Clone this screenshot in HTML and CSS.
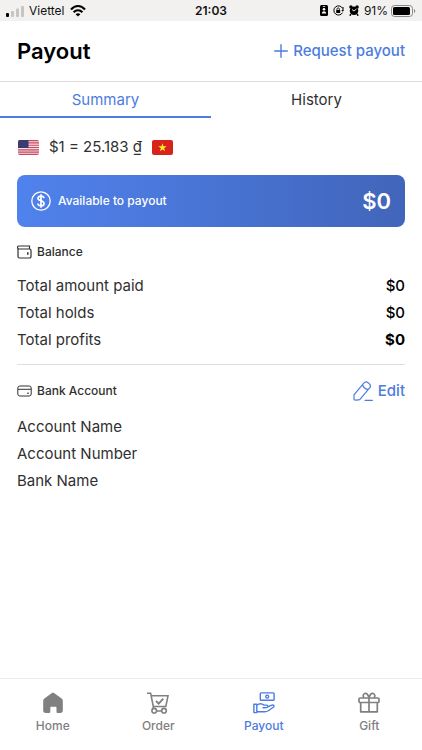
FILE: index.html
```html
<!DOCTYPE html>
<html lang="en">
<head>
<meta charset="utf-8">
<meta name="viewport" content="width=device-width, initial-scale=1">
<title>Payout</title>
<link rel="stylesheet" href="styles.css">
</head>
<body>
<div class="status">
  <div class="status-side">
    <svg width="18" height="12" viewBox="0 0 18 12"><rect x="0" y="8" width="3" height="4" rx="1" fill="#000"/><g fill="#c6c5c4"><rect x="5" y="6" width="3" height="6" rx="1"/><rect x="10" y="3.500" width="3" height="8.500" rx="1"/><rect x="15" y="1" width="3" height="11" rx="1"/></g></svg>
    <span>Viettel</span>
    <svg width="16" height="12" viewBox="0 0 16 12" fill="none" stroke="#000" stroke-width="2.100"><path d="M1 4.500C5-.1 11-.1 15 4.500M3.600 7.200c2.500-2.700 6.300-2.700 8.800 0"/><path d="M8 11.600 5.600 9.200c1.300-1.300 3.500-1.300 4.800 0z" fill="#000" stroke="none"/></svg>
  </div>
  <time class="clock">21:03</time>
  <div class="status-side status-right">
    <svg width="8" height="11" viewBox="0 0 8 11"><rect width="8" height="11" rx="1.500"/><circle cx="4" cy="4.300" r="1.300" fill="#fff"/><path d="M1.800 8.500c.3-3 4.100-3 4.400 0zM2.800 1.200h2.400v.8H2.800z" fill="#fff"/></svg>
    <svg width="11" height="11" viewBox="0 0 11 11"><path d="M9.600 3.400A4.600 4.600 0 1 0 9.500 7.700M10 2v3.200" fill="none" stroke="#000" stroke-width="1"/><path d="M8.300 5h2.700L9.700 6.800z"/><rect x="3.200" y="5" width="4" height="3" rx=".5"/><path d="M4 5V4c0-1.600 2.400-1.600 2.400 0v1" fill="none" stroke="#000" stroke-width=".8"/></svg>
    <svg width="10" height="11" viewBox="0 0 10 11"><circle cx="5" cy="5.700" r="4.300"/><circle cx="1.900" cy="2" r="1.700"/><circle cx="8.100" cy="2" r="1.700"/><path d="m2 9-1.200 1.700M8 9l1.200 1.700" stroke="#000" stroke-width="1.500"/><path d="M5 6 3 4.500M5 6l2.500-2" stroke="#fff" stroke-width=".9"/></svg>
    <div class="battery">
      <span>91%</span>
      <svg width="25" height="12" viewBox="0 0 25 12"><rect x=".5" y=".5" width="21" height="11" rx="3" fill="none" stroke="#888"/><rect x="2" y="2" width="17" height="8" rx="1.500"/><path d="M23 4c1.700.7 1.700 3.300 0 4z" fill="#888"/></svg>
    </div>
  </div>
</div>

<header class="header">
  <h1>Payout</h1>
  <button type="button" class="action">
    <svg width="14" height="14" viewBox="0 0 14 14" fill="none" stroke="currentColor" stroke-width="1.400" stroke-linecap="round"><path d="M7 .7v12.600M.7 7h12.600"/></svg>
    Request payout
  </button>
</header>

<div class="tabs" role="tablist">
  <button type="button" role="tab" aria-selected="true" class="tab tab-active">Summary</button>
  <button type="button" role="tab" aria-selected="false" class="tab">History</button>
</div>

<main class="content">
  <div class="rate">
    <svg width="21" height="15" viewBox="0 0 21 15"><defs><clipPath id="flag"><rect width="21" height="15" rx="2"/></clipPath></defs><g clip-path="url(#flag)"><path fill="#f5e1e5" d="M0 0h21v15H0z"/><path stroke="#c8485c" stroke-width="1.150" d="M0 .6h21M0 2.900h21M0 5.200h21M0 7.500h21M0 9.800h21M0 12.100h21M0 14.400h21"/><path fill="#393b70" d="M0 0h10.500v8H0z"/><path stroke="#55578a" stroke-width=".6" stroke-dasharray=".6 1.400" d="M1 2h9M2 4h8M1 6h9"/></g></svg>
    <span>$1 = 25.183 ₫</span>
    <svg width="21" height="15" viewBox="0 0 21 15"><rect width="21" height="15" rx="2" fill="#d8231d"/><path fill="#ffed25" d="m10.500 3.200 1 3.100h3.200l-2.600 1.900 1 3.100-2.600-1.900-2.600 1.900 1-3.100-2.600-1.900h3.200z"/></svg>
  </div>

  <section class="card">
    <div class="card-label">
      <svg width="20" height="20" viewBox="0 0 20 20" fill="none" stroke="#fff"><circle cx="10" cy="10" r="9.200" stroke-width="1.300"/><path d="M13 7.200c-.3-1.500-1.400-2-3-2-1.800 0-3 .8-3 2.200C7 10.500 13 9 13 12.400c0 1.500-1.200 2.400-3 2.400s-3-.8-3.200-2.300M10 3.300v13.400" stroke-width="1.700"/></svg>
      <span>Available to payout</span>
    </div>
    <strong class="card-value">$0</strong>
  </section>

  <section class="balance">
    <h2 class="section-title">
      <svg width="15" height="14" viewBox="0 0 15 14" fill="none" stroke="currentColor" stroke-width="1.200"><path d="M1 3v8.500a1.500 1.500 0 0 0 1.500 1.500h10a1.500 1.500 0 0 0 1.500-1.500v-6A1.500 1.500 0 0 0 12.500 4H2a1.500 1.500 0 0 1 0-3h10.500v3"/><path d="M10.800 7.300v2.400" stroke-width="1.500"/></svg>
      Balance
    </h2>
    <dl class="rows">
      <div class="row"><dt>Total amount paid</dt><dd>$0</dd></div>
      <div class="row"><dt>Total holds</dt><dd>$0</dd></div>
      <div class="row"><dt>Total profits</dt><dd class="total">$0</dd></div>
    </dl>
  </section>

  <section class="bank">
    <div class="bank-head">
      <h2 class="section-title">
        <svg width="15" height="12" viewBox="0 0 15 12" fill="none" stroke="currentColor"><rect x=".8" y="1" width="13.400" height="10" rx="2"/><path d="M1 4.300h13M10 8.200h2"/></svg>
        Bank Account
      </h2>
      <button type="button" class="action">
        <svg width="20" height="20" viewBox="0 0 20 20" fill="none" stroke="currentColor" stroke-width="1.200" stroke-linecap="round" stroke-linejoin="round"><path d="M1 13.800 10.800 2.100c1.300-1.500 2.900-1.600 4.400-.3l1 .8c1.500 1.300 1.600 2.900.4 4.300L7.200 18.100c-.4.500-.9.800-1.500.8l-3.200.3c-.8.100-1.500-.5-1.500-1.300zM9.500 3.800c.8 2.500 2.600 4.200 5.500 4.800M12 19.300h7.400"/></svg>
        Edit
      </button>
    </div>
    <ul class="rows">
      <li class="row">Account Name</li>
      <li class="row">Account Number</li>
      <li class="row">Bank Name</li>
    </ul>
  </section>
</main>

<nav class="nav">
  <a href="#home">
    <svg width="22" height="22" viewBox="0 0 22 22" fill="currentColor"><path d="M9.600 1.300c.9-.6 1.900-.6 2.800 0l7.200 5.300c.8.600 1.200 1.300 1.200 2.300v9.600c0 1.600-.9 2.500-2.500 2.500h-2.200c-1 0-1.600-.6-1.600-1.600v-3.600c0-.7-.4-1.100-1.100-1.100h-4c-.7 0-1.100.4-1.100 1.100v3.600c0 1-.6 1.600-1.600 1.600H3.700c-1.600 0-2.500-.9-2.500-2.500V8.900c0-1 .4-1.700 1.200-2.300z"/></svg>
    Home
  </a>
  <a href="#order">
    <svg width="22" height="22" viewBox="0 0 22 22" fill="none" stroke="currentColor" stroke-width="1.600"><path d="M0 1.200h3.600L6.300 14.500h12.500L21 3.800H4.200M6.300 14.500 6 17M9.500 19h5"/><path d="m9 9 2.700 2.600 4.600-5" stroke-width="1.900"/><circle cx="7.200" cy="18.700" r="2.300"/><circle cx="17" cy="18.700" r="2.300"/></svg>
    Order
  </a>
  <a href="#payout" class="current" aria-current="page">
    <svg width="22" height="22" viewBox="0 0 22 22" fill="none" stroke="currentColor" stroke-width="1.400" stroke-linejoin="round" stroke-linecap="round"><rect x="7.300" y=".9" width="13.800" height="7.400" rx=".8"/><circle cx="14.200" cy="4.600" r="1.500"/><path d="M.9 12.200h2.900v8.400H.9zM3.800 13.200c2.500-2 5-1.900 7.200-.1h2.600c1.700 0 1.800 2.200.1 2.400l-3.700.3M14.700 14.900l4.300-1.700c1.700-.6 2.800 1 1.300 2.100l-4.600 3.200c-1.300.9-2.500 1.300-4 1.300H3.800"/></svg>
    Payout
  </a>
  <a href="#gift">
    <svg width="22" height="22" viewBox="0 0 22 22" fill="none" stroke="currentColor" stroke-width="1.700" stroke-linejoin="round"><rect x="1" y="6" width="20" height="4.500" rx="1"/><path d="M2.700 10.500v9.300h16.600v-9.300M11 6v13.800M11 5.800C10 2.500 8.500 1 6.800 1.500 5 2.100 4.600 4.200 6 5.900M11 5.800c1-3.300 2.500-4.800 4.200-4.300 1.800.6 2.200 2.700.8 4.400"/></svg>
    Gift
  </a>
</nav>
</body>
</html>
```
FILE: styles.css
```css
* { box-sizing: border-box; }

body {
  margin: 0;
  min-height: 100vh;
  display: flex;
  flex-direction: column;
  background: #fff;
  color: #303030;
  font: 15px/20px Inter, "Liberation Sans", sans-serif;
}

h1, h2, dl, dd, ul { margin: 0; padding: 0; }
ul { list-style: none; }
svg { flex: none; display: block; }

button {
  border: 0;
  padding: 0;
  background: none;
  color: inherit;
  font: inherit;
  cursor: pointer;
}

.status {
  display: grid;
  grid-template-columns: 1fr auto 1fr;
  align-items: center;
  height: 21px;
  padding: 0 6px;
  background: #f2f1f0;
  color: #111;
  font-size: 12px;
}

.status-side {
  display: flex;
  align-items: center;
  gap: 5px;
}

.status-right { justify-content: flex-end; }

.battery {
  display: flex;
  align-items: center;
  gap: 3px;
}

.clock { font-weight: 600; }

.header {
  display: flex;
  align-items: center;
  justify-content: space-between;
  height: 61px;
  padding: 0 17px;
  border-bottom: 1px solid #dedede;
}

.header h1 {
  color: #000;
  font-size: 22px;
  font-weight: 600;
}

.action {
  display: flex;
  align-items: center;
  gap: 5px;
  color: #4c7ce0;
  font-weight: 500;
}

.tabs {
  display: grid;
  grid-template-columns: 1fr 1fr;
}

.tab {
  height: 36px;
  padding-top: 2px;
  border-bottom: 2px solid transparent;
}

.tab-active {
  border-color: #4c7ce0;
  color: #4c7ce0;
}

.content {
  flex: 1;
  padding: 19px 17px 0;
}

.rate {
  display: flex;
  align-items: center;
  gap: 10px;
  padding-left: 1px;
}

.card {
  display: flex;
  align-items: center;
  justify-content: space-between;
  height: 52px;
  margin-top: 18px;
  padding: 0 14px;
  border-radius: 8px;
  background: linear-gradient(90deg, #5082ed, #4165ba);
  color: #fff;
}

.card-label {
  display: flex;
  align-items: center;
  gap: 7px;
  font-size: 12px;
  font-weight: 500;
}

.card-value {
  font-size: 22px;
  font-weight: 600;
}

.balance {
  padding: 15px 0 11px;
  border-bottom: 1px solid #dedede;
}

.section-title {
  display: flex;
  align-items: center;
  gap: 5px;
  font-size: 12px;
  font-weight: 500;
}

.rows { margin-top: 10px; }

.row {
  display: flex;
  justify-content: space-between;
  line-height: 27px;
}

.row dd {
  color: #000;
  font-weight: 500;
}

.row .total { font-weight: 700; }

.bank { padding-top: 14px; }

.bank-head {
  display: flex;
  align-items: center;
  justify-content: space-between;
  min-height: 24px;
}

.nav {
  display: grid;
  grid-template-columns: repeat(4, 1fr);
  height: 72px;
  border-top: 1px solid #ececec;
}

.nav a {
  display: flex;
  flex-direction: column;
  align-items: center;
  gap: 2px;
  padding-top: 13px;
  color: #808080;
  font-size: 12px;
  font-weight: 500;
  text-decoration: none;
}

.nav .current { color: #4c7ce0; }
```
